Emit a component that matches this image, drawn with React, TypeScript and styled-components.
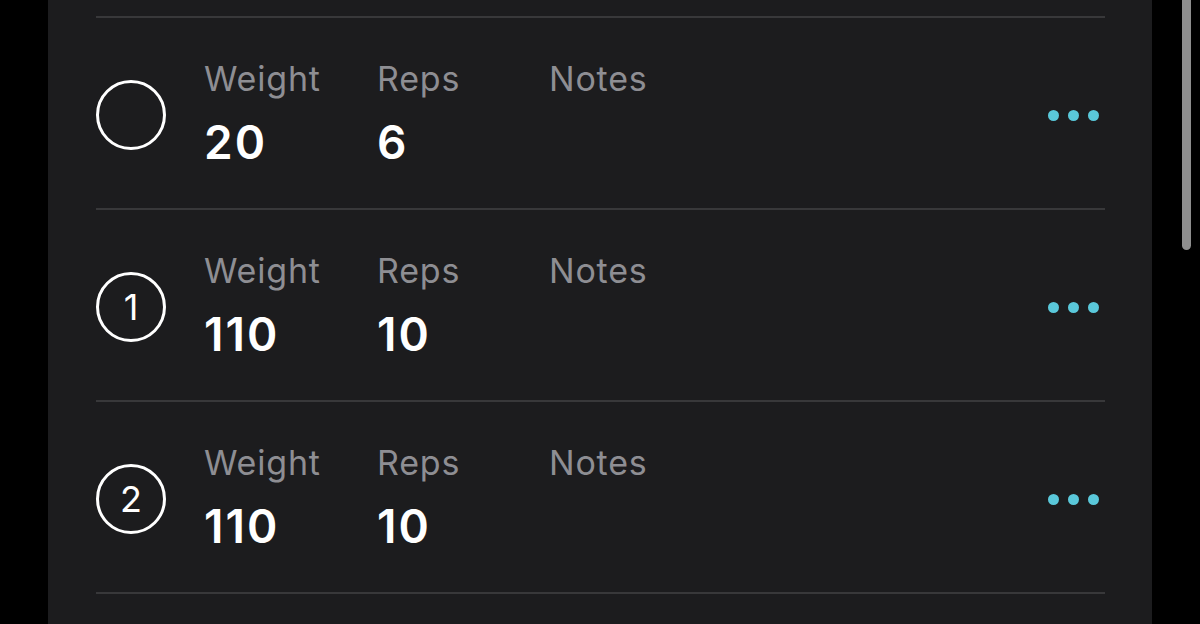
import React from 'react'
import styled, { createGlobalStyle } from 'styled-components'

const GlobalStyle = createGlobalStyle`
  html, body {
    margin: 0;
    padding: 0;
    background: #000;
    font-family: Inter, "Noto Sans", "Liberation Sans", sans-serif;
    -webkit-font-smoothing: antialiased;
  }
`

const Screen = styled.div`
  position: relative;
  width: 1200px;
  height: 624px;
  overflow: hidden;
  background: #000;
`

const Card = styled.div`
  margin-left: 48px;
  width: 1104px;
  height: 100%;
  background: #1c1c1e;
  padding: 16px 47px 0 48px;
  box-sizing: border-box;
`

const Row = styled.div`
  display: flex;
  align-items: center;
  height: 192px;
  border-top: 2px solid #38383a;
  box-sizing: border-box;
`

const SetBadge = styled.div`
  width: 70px;
  height: 70px;
  margin-top: 4px;
  border: 3px solid #fff;
  border-radius: 50%;
  box-sizing: border-box;
  flex-shrink: 0;
  display: flex;
  align-items: center;
  justify-content: center;
  color: #fff;
  font-size: 36px;
  font-weight: 400;
  line-height: 1;
`

const Fields = styled.div`
  flex: 1;
  margin-left: 38px;
  display: grid;
  grid-template-columns: 173px 172px auto;
  row-gap: 15px;
`

const Label = styled.div`
  color: #8e8e93;
  font-size: 34px;
  line-height: 40px;
  font-weight: 400;
  letter-spacing: 0.8px;
  margin-top: 2px;
`

const Value = styled.div`
  color: #fff;
  font-size: 46px;
  line-height: 56px;
  font-weight: 600;
  letter-spacing: 2px;
  height: 56px;
`

const More = styled.div`
  display: flex;
  gap: 9px;
  margin-right: 6px;
  margin-top: 4px;
`

const Dot = styled.span`
  width: 11px;
  height: 11px;
  border-radius: 50%;
  background: #5ac8da;
`

const ScrollThumb = styled.div`
  position: absolute;
  left: 1182px;
  top: -10px;
  width: 9px;
  height: 260px;
  border-radius: 5px;
  background: #8e8e8e;
`

const sets = [
  { badge: '', weight: '20', reps: '6' },
  { badge: '1', weight: '110', reps: '10' },
  { badge: '2', weight: '110', reps: '10' },
]

const App = () => {
  return (
    <Screen>
      <GlobalStyle />
      <Card>
        {sets.map((s, i) => (
          <Row key={i}>
            <SetBadge>{s.badge}</SetBadge>
            <Fields>
              <Label>Weight</Label>
              <Label>Reps</Label>
              <Label>Notes</Label>
              <Value>{s.weight}</Value>
              <Value>{s.reps}</Value>
              <Value />
            </Fields>
            <More>
              <Dot />
              <Dot />
              <Dot />
            </More>
          </Row>
        ))}
        <Row />
      </Card>
      <ScrollThumb />
    </Screen>
  )
}

export default App
